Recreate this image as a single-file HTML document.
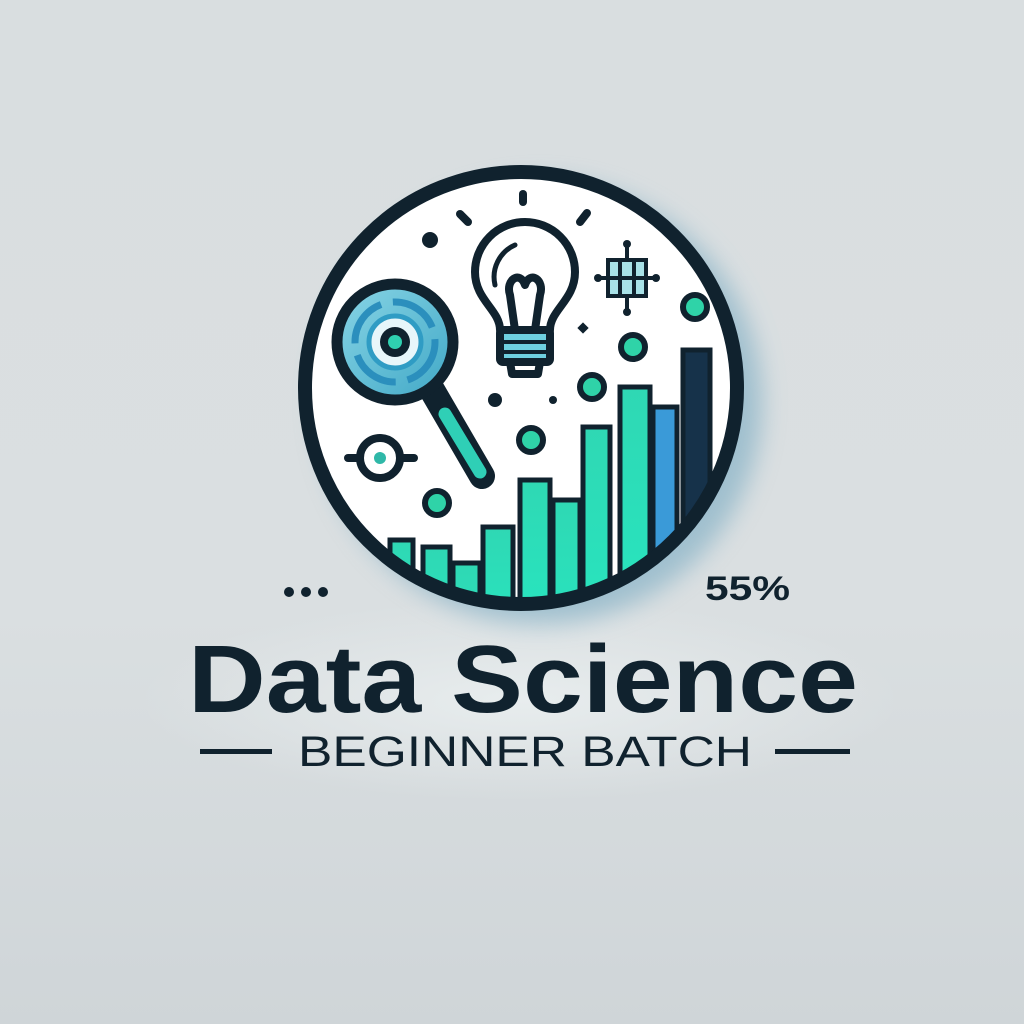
<!DOCTYPE html>
<html><head><meta charset="utf-8"><style>
html,body{margin:0;padding:0;width:1024px;height:1024px;overflow:hidden;background:#d6dbdd}
svg{display:block}
</style></head><body>
<svg width="1024" height="1024" viewBox="0 0 1024 1024" xmlns="http://www.w3.org/2000/svg">
<defs>
<linearGradient id="bg" x1="0" y1="0" x2="0" y2="1"><stop offset="0" stop-color="#d9dee0"/><stop offset="0.6" stop-color="#dadfe1"/><stop offset="1" stop-color="#cfd5d8"/></linearGradient>
<radialGradient id="glow" cx="0.5" cy="0.5" r="0.5"><stop offset="0" stop-color="#e8edee"/><stop offset="1" stop-color="#e8edee" stop-opacity="0"/></radialGradient>
<filter id="blur" x="-30%" y="-30%" width="160%" height="160%"><feGaussianBlur stdDeviation="12"/></filter>
<clipPath id="cc"><circle cx="521" cy="388" r="216"/></clipPath>
<linearGradient id="lens" x1="0" y1="0" x2="1" y2="1"><stop offset="0" stop-color="#8ad6e6"/><stop offset="1" stop-color="#3fa7c6"/></linearGradient>
<linearGradient id="bar" x1="0" y1="0" x2="0" y2="1"><stop offset="0" stop-color="#2fd8b4"/><stop offset="1" stop-color="#27e6c0"/></linearGradient>
</defs>
<rect width="1024" height="1024" fill="url(#bg)"/>
<ellipse cx="520" cy="700" rx="380" ry="100" fill="url(#glow)"/>
<circle cx="540" cy="402" r="222" fill="#6fa6bf" opacity="0.55" filter="url(#blur)"/>
<circle cx="521" cy="388" r="216" fill="#ffffff"/>
<g clip-path="url(#cc)">
  <g stroke="#10222e" stroke-width="5" fill="url(#bar)">
    <rect x="390" y="540" width="23" height="120"/>
    <rect x="423" y="547" width="27" height="120"/>
    <rect x="453" y="563" width="27" height="120"/>
    <rect x="483" y="527" width="30" height="120"/>
    <rect x="520" y="480" width="30" height="150"/>
    <rect x="553" y="500" width="27" height="150"/>
    <rect x="583" y="427" width="27" height="220"/>
    <rect x="620" y="387" width="30" height="250"/>
    <rect x="653" y="407" width="24" height="250" fill="#3a9ad8"/>
    <rect x="683" y="350" width="27" height="260" fill="#16324a"/>
  </g>
</g>
<circle cx="521" cy="388" r="216" fill="none" stroke="#10222e" stroke-width="14"/>
<!-- magnifier handle -->
<line x1="432" y1="390" x2="482" y2="476" stroke="#10222e" stroke-width="26" stroke-linecap="round"/>
<line x1="445" y1="414" x2="480" y2="472" stroke="#2fcfb6" stroke-width="13" stroke-linecap="round"/>
<!-- lens -->
<circle cx="395" cy="342" r="58" fill="url(#lens)" stroke="#10222e" stroke-width="11"/>
<circle cx="395" cy="342" r="40" fill="none" stroke="#2b8fbd" stroke-width="7" stroke-dasharray="50 12"/>
<circle cx="395" cy="342" r="26" fill="#e7f6fa" stroke="#2f9cc4" stroke-width="5"/>
<circle cx="395" cy="342" r="15" fill="#10222e"/>
<circle cx="395" cy="342" r="7" fill="#2fd0b0"/>
<!-- bulb -->
<g stroke="#10222e" stroke-width="8" fill="none" stroke-linecap="round" stroke-linejoin="round">
  <path d="M500 330 C500 310 475 300 475 272 A50 50 0 1 1 575 272 C575 300 550 310 550 330 Z" fill="#fff"/>
  <path d="M495 285 A35 35 0 0 1 515 245" stroke-width="5"/>
  <path d="M515 330 L510 295 M535 330 L540 295 M510 295 C505 280 520 270 525 285 C530 270 545 280 540 295"/>
  <rect x="500" y="330" width="50" height="32" rx="3" fill="#6ed0e0"/>
  <line x1="504" y1="342" x2="546" y2="342" stroke-width="4"/>
  <line x1="504" y1="352" x2="546" y2="352" stroke-width="4"/>
  <path d="M510 362 L512 374 L538 374 L540 362"/>
  <line x1="523" y1="194" x2="523" y2="202"/>
  <line x1="460" y1="214" x2="468" y2="222"/>
  <line x1="587" y1="213" x2="580" y2="222"/>
</g>
<!-- molecule -->
<g stroke="#10222e" stroke-width="4" fill="none">
  <rect x="608" y="260" width="38" height="36" fill="#a8e2e8"/>
  <line x1="598" y1="278" x2="656" y2="278"/>
  <line x1="620" y1="258" x2="620" y2="298"/><line x1="634" y1="258" x2="634" y2="298"/>
  <line x1="627" y1="244" x2="627" y2="258"/><line x1="627" y1="298" x2="627" y2="312"/>
</g>
<g fill="#10222e"><circle cx="627" cy="244" r="4"/><circle cx="627" cy="312" r="4"/><circle cx="598" cy="278" r="4"/><circle cx="656" cy="278" r="4"/></g>
<g fill="#10222e">
  <circle cx="430" cy="240" r="8"/>
  <circle cx="495" cy="400" r="7"/>
  <circle cx="553" cy="400" r="4"/>
  <rect x="579" y="324" width="8" height="8" transform="rotate(45 583 328)"/>
</g>
<g fill="#2fd3a8" stroke="#10222e" stroke-width="6">
  <circle cx="695" cy="307" r="12"/>
  <circle cx="633" cy="347" r="12"/>
  <circle cx="592" cy="387" r="12"/>
  <circle cx="531" cy="440" r="12"/>
  <circle cx="437" cy="503" r="12"/>
</g>
<g stroke="#10222e" stroke-width="8" fill="none" stroke-linecap="round">
  <circle cx="380" cy="458" r="20"/>
  <line x1="348" y1="458" x2="358" y2="458"/><line x1="402" y1="458" x2="414" y2="458"/>
</g>
<circle cx="380" cy="458" r="6" fill="#2fb8a8"/>
<g fill="#10222e"><circle cx="289" cy="592" r="5"/><circle cx="306" cy="592" r="5"/><circle cx="323" cy="592" r="5"/></g>
<text x="705" y="600" font-family="Liberation Sans, sans-serif" font-weight="bold" font-size="34" fill="#10222e" textLength="85" lengthAdjust="spacingAndGlyphs">55%</text>
<text x="188" y="712" font-family="Liberation Sans, sans-serif" font-weight="bold" font-size="96" fill="#10222e" textLength="670" lengthAdjust="spacingAndGlyphs">Data Science</text>
<rect x="200" y="749" width="72" height="5" fill="#10222e"/>
<rect x="775" y="749" width="75" height="5" fill="#10222e"/>
<text x="298" y="766" font-family="Liberation Sans, sans-serif" font-size="43" fill="#10222e" textLength="454" lengthAdjust="spacingAndGlyphs">BEGINNER BATCH</text>
</svg>
</body></html>
